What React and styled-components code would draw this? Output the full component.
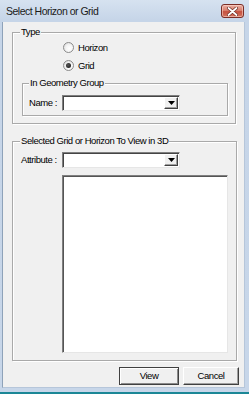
import React from "react";
import styled, { createGlobalStyle } from "styled-components";

const Global = createGlobalStyle`
  html, body { margin: 0; padding: 0; background: #1b8796; }
  body { width: 249px; height: 394px; overflow: hidden; }
  #root { width: 249px; height: 394px; }
  * { box-sizing: border-box; }
`;

const UI_FONT = `"Liberation Sans", Arial, sans-serif`;

const Window = styled.div`
  width: 249px;
  height: 394px;
  display: flex;
  flex-direction: column;
  background: linear-gradient(#d6e2f0 0px, #c6d5e8 20px, #c7d6e9 100%);
  font-family: ${UI_FONT};
  font-size: 9.5px;
  letter-spacing: -0.45px;
  color: #000;
`;

const TitleBar = styled.div`
  height: 22px;
  flex: none;
  display: flex;
  justify-content: space-between;
  align-items: flex-start;
  padding: 0 5px 0 6px;
`;

const Title = styled.span`
  font-size: 10.5px;
  letter-spacing: -0.5px;
  line-height: 12px;
  margin-top: 5px;
  color: #1a1a1a;
`;

const CloseButton = styled.div`
  width: 23px;
  height: 14px;
  margin-top: 4px;
  border: 1px solid #7b2d26;
  border-radius: 3px;
  background: linear-gradient(#eab0a4 0%, #d98170 45%, #c65140 55%, #d2735e 100%);
  box-shadow: inset 0 0 0 1px rgba(255, 220, 210, 0.55);
  display: flex;
  align-items: center;
  justify-content: center;
`;

const Frame = styled.div`
  flex: 1;
  display: flex;
  padding: 0 4px 4px 2px;
  border-bottom: 2px solid #1b8796;
`;

const Client = styled.div`
  flex: 1;
  background: #f0f0f0;
  border-left: 1px solid #8ea2b9;
  border-right: 1px solid #b6c6da;
  border-bottom: 1px solid #b6c6da;
  display: flex;
  flex-direction: column;
  padding: 10px 0 0 9px;
`;

const Group = styled.div`
  position: relative;
  border: 1px solid #a9a9a9;
  box-shadow: inset 1px 1px 0 #fff, 1px 1px 0 #fff;
  margin-right: ${(p) => p.$mr}px;
  margin-top: ${(p) => p.$mt || 0}px;
  margin-left: ${(p) => p.$ml || 0}px;
  padding: ${(p) => p.$pad};
  display: flex;
  flex-direction: column;
`;

const Legend = styled.span`
  position: absolute;
  top: -7px;
  left: ${(p) => p.$left}px;
  padding: 0 1px;
  background: #f0f0f0;
  line-height: 12px;
  white-space: nowrap;
`;

const RadioList = styled.div`
  display: flex;
  flex-direction: column;
  margin-left: 50px;
`;

const RadioRow = styled.div`
  height: 18px;
  display: flex;
  align-items: center;
  gap: 4px;
`;

const RadioCircle = styled.span`
  width: 11px;
  height: 11px;
  border-radius: 50%;
  border: 1px solid #8b8b8b;
  background: radial-gradient(circle at 60% 60%, #ffffff 0%, #f4f4f4 45%, #d2d2d2 100%);
  display: flex;
  align-items: center;
  justify-content: center;
`;

const RadioDot = styled.span`
  width: 5px;
  height: 5px;
  border-radius: 50%;
  background: radial-gradient(circle at 40% 40%, #555, #111);
`;

const FieldRow = styled.div`
  display: flex;
  align-items: center;
  padding-left: ${(p) => p.$pl}px;
`;

const FieldLabel = styled.span`
  width: ${(p) => p.$w}px;
  flex: none;
  line-height: 12px;
  white-space: nowrap;
`;

const Combo = styled.div`
  width: 118px;
  height: 16px;
  background: #fff;
  border: 1px solid;
  border-color: #7f7f7f #e6e6e6 #e6e6e6 #7f7f7f;
  box-shadow: inset 1px 1px 0 #444;
  display: flex;
  justify-content: flex-end;
  padding: 1px 1px 1px 2px;
`;

const DropButton = styled.div`
  width: 14px;
  height: 100%;
  background: #f0f0f0;
  border: 1px solid;
  border-color: #fff #404040 #404040 #fff;
  box-shadow: inset -1px -1px 0 #a0a0a0;
  display: flex;
  align-items: center;
  justify-content: center;
`;

const ListBox = styled.div`
  margin: 7px 0 0 49px;
  width: 166px;
  height: 178px;
  background: #fff;
  border: 1px solid;
  border-color: #808080 #e6e6e6 #e6e6e6 #808080;
  box-shadow: inset 1px 1px 0 #555;
`;

const ButtonRow = styled.div`
  display: flex;
  justify-content: flex-end;
  gap: 4px;
  margin-top: 6px;
  padding-right: 5px;
`;

const Button = styled.div`
  width: ${(p) => p.$w}px;
  height: 18px;
  background: #f0f0f0;
  border: 1px solid;
  border-color: ${(p) => (p.$default ? "#404040" : "#fff #404040 #404040 #fff")};
  box-shadow: ${(p) =>
    p.$default
      ? "inset 1px 1px 0 #fff, inset -1px -1px 0 #8a8a8a"
      : "inset -1px -1px 0 #a0a0a0"};
  display: flex;
  align-items: center;
  justify-content: center;
  line-height: 12px;
`;

function Arrow() {
  return (
    <svg width="7" height="4" viewBox="0 0 7 4">
      <path d="M0 0H7L3.5 4Z" fill="#000" />
    </svg>
  );
}

function CloseGlyph() {
  return (
    <svg width="11" height="9" viewBox="0 0 11 9">
      <path
        d="M1.5 1L9.5 8M9.5 1L1.5 8"
        stroke="#6b2a22"
        strokeWidth="3.2"
        strokeLinecap="round"
      />
      <path
        d="M1.5 1L9.5 8M9.5 1L1.5 8"
        stroke="#fff"
        strokeWidth="1.8"
        strokeLinecap="round"
      />
    </svg>
  );
}

function Radio({ checked, label }) {
  return (
    <RadioRow>
      <RadioCircle>{checked && <RadioDot />}</RadioCircle>
      <span>{label}</span>
    </RadioRow>
  );
}

function ComboBox() {
  return (
    <Combo>
      <DropButton>
        <Arrow />
      </DropButton>
    </Combo>
  );
}

export default function App() {
  return (
    <>
      <Global />
      <Window>
        <TitleBar>
          <Title>Select Horizon or Grid</Title>
          <CloseButton>
            <CloseGlyph />
          </CloseButton>
        </TitleBar>
        <Frame>
          <Client>
            <Group $mr={8} $pad="5px 0 7px 0">
              <Legend $left={7}>Type</Legend>
              <RadioList>
                <Radio label="Horizon" />
                <Radio label="Grid" checked />
              </RadioList>
              <Group $mr={7} $ml={9} $mt={9} $pad="11px 0 4px 0">
                <Legend $left={6}>In Geometry Group</Legend>
                <FieldRow $pl={6}>
                  <FieldLabel $w={33}>Name :</FieldLabel>
                  <ComboBox />
                </FieldRow>
              </Group>
            </Group>
            <Group $mr={7} $mt={17} $pad="10px 0 7px 0">
              <Legend $left={7}>Selected Grid or Horizon To View in 3D</Legend>
              <FieldRow $pl={8}>
                <FieldLabel $w={41}>Attribute :</FieldLabel>
                <ComboBox />
              </FieldRow>
              <ListBox />
            </Group>
            <ButtonRow>
              <Button $w={60} $default>
                View
              </Button>
              <Button $w={56}>Cancel</Button>
            </ButtonRow>
          </Client>
        </Frame>
      </Window>
    </>
  );
}
